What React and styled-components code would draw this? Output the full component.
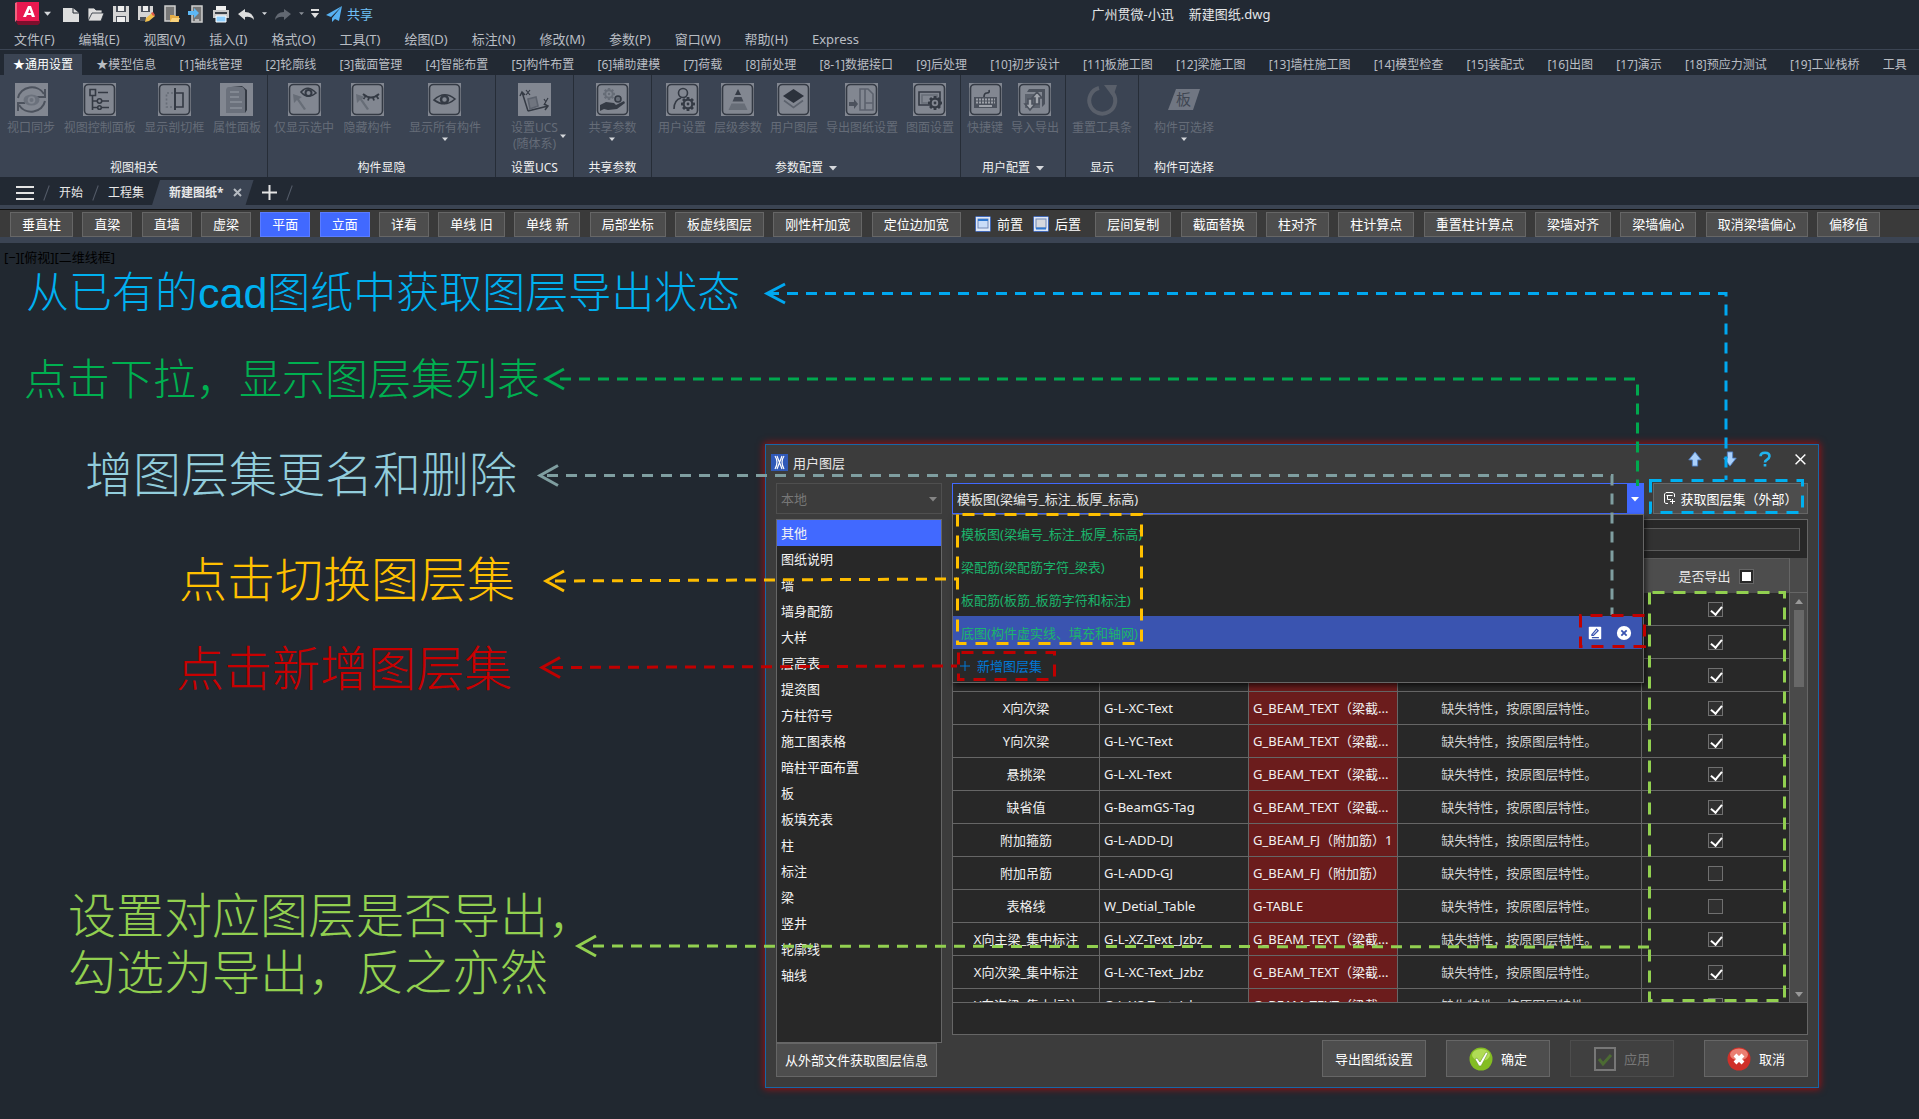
import React from "react";
import styled, { createGlobalStyle } from "styled-components";

const sans = `"Noto Sans", "Noto Sans CJK SC", sans-serif`;

const menus = [
  "文件(F)", "编辑(E)", "视图(V)", "插入(I)", "格式(O)", "工具(T)", "绘图(D)",
  "标注(N)", "修改(M)", "参数(P)", "窗口(W)", "帮助(H)", "Express"
];

const ribbonTabs = [
  "★通用设置", "★模型信息", "[1]轴线管理", "[2]轮廓线", "[3]截面管理", "[4]智能布置",
  "[5]构件布置", "[6]辅助建模", "[7]荷载", "[8]前处理", "[8-1]数据接口", "[9]后处理",
  "[10]初步设计", "[11]板施工图", "[12]梁施工图", "[13]墙柱施工图", "[14]模型检查",
  "[15]装配式", "[16]出图", "[17]演示", "[18]预应力测试", "[19]工业栈桥", "工具"
];

const ribbonGroups = [
  { title: "视图相关", width: 267, tools: [
    { label: "视口同步", icon: "sync" },
    { label: "视图控制面板", icon: "tree" },
    { label: "显示剖切框", icon: "section" },
    { label: "属性面板", icon: "sheet" }
  ]},
  { title: "构件显隐", width: 228, tools: [
    { label: "仅显示选中", icon: "eyePick" },
    { label: "隐藏构件", icon: "eyeClosed" },
    { label: "显示所有构件", icon: "eye", menu: true }
  ]},
  { title: "设置UCS", width: 78, tools: [
    { label: "设置UCS", second: "(随体系)", icon: "ucs" }
  ]},
  { title: "共享参数", width: 78, tools: [
    { label: "共享参数", icon: "hand", menu: true }
  ]},
  { title: "参数配置", width: 309, more: true, tools: [
    { label: "用户设置", icon: "userGear" },
    { label: "层级参数", icon: "pyramid" },
    { label: "用户图层", icon: "layers" },
    { label: "导出图纸设置", icon: "exportSheet" },
    { label: "图面设置", icon: "screenGear" }
  ]},
  { title: "用户配置", width: 105, more: true, tools: [
    { label: "快捷键", icon: "keyboard" },
    { label: "导入导出", icon: "transfer" }
  ]},
  { title: "显示", width: 73, tools: [
    { label: "重置工具条", icon: "reset", bare: true }
  ]},
  { title: "构件可选择", width: 90, tools: [
    { label: "构件可选择", icon: "board", bare: true, menu: true }
  ]}
];

const toolsLeft = [
  "垂直柱", "直梁", "直墙", "虚梁", "平面", "立面", "详看", "单线 旧", "单线 新",
  "局部坐标", "板虚线图层", "刚性杆加宽", "定位边加宽"
];
const toolsRight = [
  "层间复制", "截面替换", "柱对齐", "柱计算点", "重置柱计算点", "梁墙对齐", "梁墙偏心",
  "取消梁墙偏心", "偏移值"
];

const categories = [
  "其他", "图纸说明", "墙", "墙身配筋", "大样", "层高表", "提资图", "方柱符号", "施工图表格",
  "暗柱平面布置", "板", "板填充表", "柱", "标注", "梁", "竖井", "轮廓线", "轴线"
];

const layerSets = [
  "模板图(梁编号_标注_板厚_标高)",
  "梁配筋(梁配筋字符_梁表)",
  "板配筋(板筋_板筋字符和标注)",
  "底图(构件虚实线、填充和轴网)"
];

const beam = "G_BEAM_TEXT（梁截...";
const layers = [
  { name: "", layer: "", std: "", note: "", on: true },
  { name: "", layer: "", std: "", note: "", on: true },
  { name: "", layer: "", std: "", note: "", on: true },
  { name: "X向次梁", layer: "G-L-XC-Text", std: beam, on: true },
  { name: "Y向次梁", layer: "G-L-YC-Text", std: beam, on: true },
  { name: "悬挑梁", layer: "G-L-XL-Text", std: beam, on: true },
  { name: "缺省值", layer: "G-BeamGS-Tag", std: beam, on: true },
  { name: "附加箍筋", layer: "G-L-ADD-DJ", std: "G_BEAM_FJ（附加筋）1", on: true },
  { name: "附加吊筋", layer: "G-L-ADD-GJ", std: "G_BEAM_FJ（附加筋）", on: false },
  { name: "表格线", layer: "W_Detial_Table", std: "G-TABLE", on: false },
  { name: "X向主梁_集中标注", layer: "G-L-XZ-Text_Jzbz", std: beam, on: true },
  { name: "X向次梁_集中标注", layer: "G-L-XC-Text_Jzbz", std: beam, on: true },
  { name: "Y向次梁_集中标注", layer: "G-L-YC-Text_Jzbz", std: beam, on: true }
];

const notes = [
  { lines: ["从已有的cad图纸中获取图层导出状态"], x: 26, y: 265, size: 43, color: "#00b0f0" },
  { lines: ["点击下拉，显示图层集列表"], x: 24, y: 352, size: 43, color: "#00b050" },
  { lines: ["增图层集更名和删除"], x: 85, y: 447, size: 48, color: "#92cddc" },
  { lines: ["点击切换图层集"], x: 179, y: 552, size: 48, color: "#ffc000" },
  { lines: ["点击新增图层集"], x: 176, y: 641, size: 48, color: "#c80000" },
  { lines: ["设置对应图层是否导出，", "勾选为导出，反之亦然"], x: 68, y: 888, size: 48, color: "#92d050" }
];

const GlobalStyle = createGlobalStyle`
  * {
    box-sizing: border-box;
  }

  body {
    margin: 0;
    background: #212830;
    font-family: ${sans};
    font-size: 13px;
    line-height: 16px;
    color: #e8e8e8;
  }

  button, select, input {
    font: inherit;
    color: inherit;
    margin: 0;
  }

  ul {
    list-style: none;
    margin: 0;
    padding: 0;
  }

  svg {
    display: block;
    flex: none;
  }
`;

const Caret = ({ size = 7, color = "#d5d8dc" }) => (
  <svg width={size} height={size} viewBox="0 0 8 8" aria-hidden="true">
    <path d="M0 2h8L4 6.500z" fill={color} />
  </svg>
);

const Gear = ({ x, y, r, fill = "#343a44", hole = "#828791" }) => (
  <g transform={`translate(${x} ${y})`} stroke="none">
    {[0, 45, 90, 135].map((a) => (
      <rect key={a} x={-r * 0.2} y={-r} width={r * 0.4} height={r * 2} fill={fill} transform={`rotate(${a})`} />
    ))}
    <circle r={r * 0.78} fill={fill} />
    <circle r={r * 0.46} fill={hole} />
    <circle r={r * 0.2} fill={fill} />
  </g>
);

const frame = <rect x="1.500" y="1.500" width="30" height="30" rx="4" />;

const drawings = {
  sync: (
    <>
      <path d="M3 15A14 13 0 0 1 29 11M30 18A14 13 0 0 1 4 22M30 6v8h-8M3 28v-8h7" strokeWidth="2" stroke="#4c525d" />
      <ellipse cx="16.500" cy="17" rx="8" ry="5.500" fill="#6b717c" stroke="none" />
      <circle cx="16.500" cy="17" r="3.800" fill="#828791" stroke="none" />
      <circle cx="16.500" cy="17" r="2" fill="#6b717c" stroke="none" />
    </>
  ),
  tree: (
    <>
      {frame}
      <path d="M7 6.500h5.500v6H7zM15 9.500h10M9.500 13v14M9.500 18h5M9.500 24.500h5M18.500 18H26M18.500 24.500H26" />
      <circle cx="16.500" cy="18" r="2.200" />
      <circle cx="16.500" cy="24.500" r="1.800" />
    </>
  ),
  section: (
    <>
      {frame}
      <path d="M17 5v22" strokeWidth="2" />
      <path d="M17 10h8v14h-8" />
      <path d="M15 10H8.500v14H15" strokeDasharray="2 2" stroke="#676d77" />
    </>
  ),
  sheet: (
    <>
      <path d="M11 3h11l5 4v20l-2 3V8l-3-4z" fill="#343a44" stroke="none" />
      <path d="M9 4h13q3 1 3 5v21H6V8q0-4 3-4z" fill="#6b717c" stroke="none" />
      <path d="M10 9h9M10 14h9M10 19h12M10 25h12" stroke="#8b9099" />
    </>
  ),
  eyePick: (
    <>
      {frame}
      <path d="M13 9q7-8 15 1-8 7-15-1z" />
      <circle cx="20.500" cy="10" r="3" strokeWidth="2" />
      <path d="M5 11l9 3-3 2 7 10-2 1-7-10-3 3z" fill="#676d77" stroke="none" />
    </>
  ),
  eyeClosed: (
    <>
      {frame}
      <path d="M12 11q8 7 16 0M14.500 13l-2 3M18 14.500l-1 3M22 14.500l1 3M25.500 13l2 3" strokeWidth="1.800" />
      <path d="M5 11l9 3-3 2 7 10-2 1-7-10-3 3z" fill="#676d77" stroke="none" />
    </>
  ),
  eye: (
    <>
      {frame}
      <path d="M6 17q10-10 21-1-10 9-21 1z" />
      <circle cx="16.500" cy="16.500" r="3.500" strokeWidth="2.500" />
    </>
  ),
  ucs: (
    <>
      <path d="M10 28L4 9M2 13l2-4 3 3M10 28l20-5M26 21l4 2-3 4" strokeWidth="1.500" />
      <path d="M8 7l4 5M12 7l-4 5M26 16l2 3M30 15l-4 7" strokeWidth="1.200" />
      <path d="M10 16l8-2 2 9-8 3z" fill="#70757f" stroke="#5c626d" />
    </>
  ),
  hand: (
    <>
      {frame}
      <Gear x={13} y={11} r={6} fill="#676d77" />
      <circle cx="22" cy="16" r="3" fill="#676d77" />
      <path d="M4 22l6-3 8 1 2 2 8-4 1 2-8 6-9 1-4-1-4 2z" fill="#343a44" stroke="none" />
    </>
  ),
  userGear: (
    <>
      {frame}
      <circle cx="17" cy="10" r="4.500" />
      <path d="M8 26q0-9 7-11" />
      <Gear x={22} y={21} r={7} />
    </>
  ),
  pyramid: (
    <>
      {frame}
      <path d="M17 6l3 6h-6z" fill="#343a44" stroke="none" />
      <path d="M13.500 14h7l2 4.500h-11z" fill="#444a55" stroke="none" />
      <path d="M10.500 20.500h13l3 6.500h-19z" fill="#676d77" stroke="none" />
    </>
  ),
  layers: (
    <>
      {frame}
      <path d="M16.500 6l10.500 7-10.500 7L6 13z" fill="#2c323c" stroke="none" />
      <path d="M7 17.500l9.500 7 9.500-7" stroke="#5c626d" />
    </>
  ),
  exportSheet: (
    <>
      {frame}
      <path d="M15 27V6h8l5 5v16zM20 6v21M20 20h8" stroke="#5c626d" />
      <path d="M4 19h5v-3l4 5-4 5v-3H4z" fill="#4c525d" stroke="none" />
    </>
  ),
  screenGear: (
    <>
      {frame}
      <path d="M6 9h21v13H6z" />
      <path d="M9 12h15v8H9z" stroke="#676d77" />
      <Gear x={22} y={20} r={7} />
    </>
  ),
  keyboard: (
    <>
      {frame}
      <path d="M5 14h23v11H5z" fill="#4c525d" stroke="none" />
      <path d="M7 16.500h19M7 19.500h19" strokeDasharray="2 1" strokeWidth="2" stroke="#9da1a9" />
      <path d="M10 23h13" strokeWidth="2" stroke="#9da1a9" />
      <path d="M15 14q0-4 3-4t2-3" />
    </>
  ),
  transfer: (
    <>
      {frame}
      <path d="M7 11h15v14H7z" fill="#5c626d" stroke="none" />
      <path d="M9 9l2-3h16v15l-3 3V9z" fill="#4c525d" stroke="none" />
      <path d="M19 9l5 6h-3v6h-4v-6h-3zM12 27l-5-6h3v-5h4v5h3z" fill="#a2a6ad" stroke="#4c525d" />
    </>
  ),
  reset: (
    <>
      <path d="M13 5A13 13 0 1 0 26 9" stroke="#595f6a" strokeWidth="4" />
      <path d="M18 2h13L27 14z" fill="#595f6a" stroke="none" />
    </>
  ),
  board: (
    <>
      <path d="M9 6h24l-7 21H1z" fill="#707682" stroke="none" />
      <text x="9" y="22" fontSize="15" fill="#3f4652" stroke="none">板</text>
    </>
  )
};

const RibbonIcon = ({ name, bare }) => (
  <svg width="33" height="33" viewBox="0 0 33 33" fill="none" stroke="#343a44" strokeWidth="1.600" aria-hidden="true">
    {!bare && <rect width="33" height="33" fill="#828791" stroke="none" />}
    {drawings[name]}
  </svg>
);

const quickIcons = [
  { name: "新建", art: (
    <>
      <path d="M1 3h10l6 5v9H1z" fill="#dedede" />
      <path d="M11 3v5h6" stroke="#222933" />
    </>
  )},
  { name: "打开", art: <path d="M1 16V3h6l2 2h6v3M1 16L5 8h12l-3 8z" fill="#dedede" stroke="#222933" strokeWidth=".8" /> },
  { name: "保存", art: (
    <>
      <path d="M1 1h16v16H1z" fill="#d5d5d5" />
      <path d="M4 1h10v6H4zM4 11h10v6H4z" fill="#4a505a" />
      <path d="M6 1h6v5H6zM5 12h8v5H5z" fill="#efefef" />
    </>
  )},
  { name: "另存为", art: (
    <>
      <path d="M1 1h15v9l-5 5H1z" fill="#d5d5d5" />
      <path d="M4 1h9v6H4zM3 12h6v4H3z" fill="#4a505a" />
      <path d="M6 1h5v5H6z" fill="#efefef" />
      <path d="M8 17l1-4 6-5 3 3-6 5z" fill="#f2c14f" />
      <path d="M14 8l2-1 2 3-2 1z" fill="#e05a4a" />
    </>
  )},
  { name: "从移动设备打开", art: (
    <>
      <path d="M3 1h10v15H3z" fill="#777" stroke="#cfcfcf" strokeWidth="1.500" />
      <path d="M8 10h4l1 1h4v6H8z" fill="#e6ad45" />
      <path d="M8 17l2-4h8l-2 4z" fill="#fad37d" />
    </>
  )},
  { name: "保存到移动设备", art: (
    <>
      <path d="M5 1h10v16H5z" fill="#777" stroke="#cfcfcf" strokeWidth="1.500" />
      <path d="M1 6h6V3l5 5-5 5v-3H1z" fill="#5db8f5" />
      <path d="M8 15h4" stroke="#fff" />
    </>
  )},
  { name: "打印", art: (
    <>
      <path d="M4 1h10v5H4z" fill="#efefef" />
      <path d="M1 5h16v8H1z" fill="#c9c9c9" />
      <path d="M3 7h12v2H3z" fill="#3a4048" />
      <path d="M4 11h10v6H4z" fill="#8fd0ff" stroke="#fff" />
    </>
  )},
  { name: "放弃", menu: true, art: <path d="M1 9l7-5v3q8 0 9 8-3-4-9-3v3z" fill="#dedede" /> },
  { name: "重做", menu: true, dim: true, art: <path d="M17 9l-7-5v3q-8 0-9 8 3-4 9-3v3z" fill="#626872" /> }
];

const Art = ({ children, size = 18 }) => (
  <svg width={size} height={size} viewBox="0 0 18 18" fill="none" aria-hidden="true">{children}</svg>
);

// dashed callout lines drawn above the window
const Leaders = () => (
  <LeaderLayer aria-hidden="true">
    <g fill="none" strokeWidth="3" strokeDasharray="11 8">
      <path d="M768 293.500H1726V480" stroke="#00a8f0" />
      <path d="M560 379H1637.500V486" stroke="#00a84e" />
      <path d="M547 475.500H1612V615" stroke="#7f9ea0" />
      <path d="M555 581L957 579" stroke="#fdbc00" />
      <path d="M552 667.500L957 666" stroke="#c00000" />
      <path d="M593 946L1650 947" stroke="#92d050" />
    </g>
    <g fill="none" strokeWidth="3">
      <path d="M785 284l-18 9.500 18 9.500" stroke="#00a8f0" />
      <path d="M564 369l-18 10 18 10" stroke="#00a84e" />
      <path d="M558 465.500l-18 10 18 10" stroke="#7f9ea0" />
      <path d="M564 571l-18 10 18 10" stroke="#fdbc00" />
      <path d="M560 657.500l-18 10 18 10" stroke="#c00000" />
      <path d="M596 936l-18 10 18 10" stroke="#92d050" />
    </g>
    <g fill="none" strokeWidth="3" strokeDasharray="12 9">
      <path d="M957.500 514.500V643.500H1141.500V514.500z" stroke="#ffc000" />
      <path d="M958.500 652.500V679.500H1054.500V652.500z" stroke="#c00000" />
      <path d="M1580.500 615.500V646.500H1644.500V615.500z" stroke="#c00000" />
      <path d="M1650.500 480.500V512.500H1802.500V480.500z" stroke="#00b0f0" />
      <path d="M1649.500 592.500V1000.500H1784.500V592.500z" stroke="#92d050" />
    </g>
  </LeaderLayer>
);

function LayerDialog() {
  return (
    <Dialog role="dialog" aria-label="用户图层">
      <DialogTitle>
        <svg width="17" height="17" viewBox="0 0 17 17" aria-hidden="true">
          <rect width="17" height="17" fill="#3059b8" />
          <path d="M4 2q4 6 0 13M13 2q-4 6 0 13M6 2l5 13M11 2L6 15" fill="none" stroke="#fff" strokeWidth="1.200" />
        </svg>
        <span>用户图层</span>
        <WindowTools>
          <IconButton aria-label="上移">
            <Art size={16}><path d="M9 1l7 9h-4v7H6v-7H2z" fill="#a9d0fb" stroke="#4f7fc4" /></Art>
          </IconButton>
          <IconButton aria-label="下移">
            <Art size={16}><path d="M9 17l7-9h-4V1H6v7H2z" fill="#a9d0fb" stroke="#4f7fc4" /></Art>
          </IconButton>
          <IconButton aria-label="帮助">
            <Art size={16}>
              <path d="M4 6q0-4 5-4t5 4q0 2-3 4-2 1-2 3M9 14.500v3" stroke="#21b4ee" strokeWidth="3" />
            </Art>
          </IconButton>
          <IconButton aria-label="关闭">
            <Art size={16}><path d="M4 4l11 11M15 4L4 15" stroke="#fff" strokeWidth="1.600" /></Art>
          </IconButton>
        </WindowTools>
      </DialogTitle>
      <DialogBody>
        <SideColumn>
          <SourceCombo>
            <ComboSelect disabled aria-label="来源" defaultValue="本地">
              <option>本地</option>
            </ComboSelect>
            <ComboArrow><Caret size={8} color="#858585" /></ComboArrow>
          </SourceCombo>
          <CategoryList>
            {categories.map((c, i) => <Category key={c} $active={i === 0}>{c}</Category>)}
          </CategoryList>
          <SourceButton>从外部文件获取图层信息</SourceButton>
        </SideColumn>
        <MainColumn>
          <ComboRow>
            <SetCombo>
              <ComboSelect aria-label="图层集" defaultValue={layerSets[0]}>
                {layerSets.map((s) => <option key={s}>{s}</option>)}
              </ComboSelect>
              <ComboArrow $filled><Caret size={8} color="#fff" /></ComboArrow>
              <DropList>
                {layerSets.map((s, i) => (
                  <DropItem key={s} $active={i === 3}>
                    {s}
                    {i === 3 && (
                      <DropActions>
                        <IconButton aria-label="更名">
                          <Art size={14}>
                            <rect x="1" y="1" width="16" height="16" rx="1" fill="#fff" />
                            <path d="M5 11l6-7 2 2-6 6H5zM5 15h9" stroke="#3a54b0" strokeWidth="1.600" />
                          </Art>
                        </IconButton>
                        <IconButton aria-label="删除">
                          <Art size={16}>
                            <circle cx="9" cy="9" r="8" fill="#fff" />
                            <path d="M6 6l6 6M12 6l-6 6" stroke="#3a54b0" strokeWidth="2" />
                          </Art>
                        </IconButton>
                      </DropActions>
                    )}
                  </DropItem>
                ))}
                <NewSet>
                  <svg width="10" height="10" viewBox="0 0 10 10" aria-hidden="true">
                    <path d="M5 0v10M0 5h10" stroke="#0078d7" />
                  </svg>
                  新增图层集
                </NewSet>
              </DropList>
            </SetCombo>
            <FetchButton>
              <svg width="13" height="13" viewBox="0 0 13 13" fill="none" stroke="#fff" aria-hidden="true">
                <path d="M5 11.500H3l-1.500-1V2L3 .5h7L11.500 2v3M3.500 3.500h6M4.500 3.500v4H8M7 9.500h5M9.500 7v5" />
              </svg>
              获取图层集（外部）
            </FetchButton>
          </ComboRow>
          <Panel>
            <SearchBar>
              <SearchInput type="text" aria-label="搜索" />
            </SearchBar>
            <TableArea>
              <LayerTable>
                <colgroup>
                  <Col $w={147} /><Col $w={149} /><Col $w={147} /><Col /><Col $w={148} />
                </colgroup>
                <thead>
                  <tr>
                    <HeadCell /><HeadCell /><HeadCell /><HeadCell />
                    <HeadCell>
                      <HeadLabel>是否导出 <MasterCheck type="checkbox" /></HeadLabel>
                    </HeadCell>
                  </tr>
                </thead>
                <tbody>
                  {layers.map((row, i) => (
                    <tr key={i}>
                      <Cell $center>{row.name}</Cell>
                      <Cell>{row.layer}</Cell>
                      <Cell $red>{row.std}</Cell>
                      <Cell $center $muted>{row.note ?? "缺失特性，按原图层特性。"}</Cell>
                      <Cell $center>
                        <Check type="checkbox" defaultChecked={row.on} aria-label={`导出 ${row.name}`} />
                      </Cell>
                    </tr>
                  ))}
                </tbody>
              </LayerTable>
              <ScrollColumn>
                <ScrollHead />
                <ScrollTrack>
                  <svg width="8" height="5" viewBox="0 0 8 5" aria-hidden="true"><path d="M0 5h8L4 0z" fill="#999" /></svg>
                  <Thumb />
                  <svg width="8" height="5" viewBox="0 0 8 5" aria-hidden="true"><path d="M0 0h8L4 5z" fill="#999" /></svg>
                </ScrollTrack>
              </ScrollColumn>
            </TableArea>
            <PanelFoot />
          </Panel>
          <Actions>
            <Action>导出图纸设置</Action>
            <Action>
              <svg width="24" height="24" viewBox="0 0 24 24" aria-hidden="true">
                <circle cx="12" cy="12" r="11.500" fill="#84bd22" />
                <ellipse cx="12" cy="8" rx="9" ry="6" fill="#b0dc55" />
                <path d="M6 12l2-1 3 4 6-10 2 1-7 13h-2z" fill="#fff" stroke="#6c9a22" strokeWidth=".6" />
              </svg>
              确定
            </Action>
            <Action disabled>
              <svg width="22" height="24" viewBox="0 0 22 24" fill="none" aria-hidden="true">
                <rect x="1" y="1" width="20" height="22" stroke="#777" strokeWidth="2" />
                <path d="M5 12l4 5 8-9" stroke="#4c6b33" strokeWidth="3" />
              </svg>
              应用
            </Action>
            <Action $last>
              <svg width="24" height="24" viewBox="0 0 24 24" aria-hidden="true">
                <circle cx="12" cy="12" r="11.500" fill="#cf3029" />
                <ellipse cx="12" cy="7.500" rx="9" ry="6" fill="#ea7f72" />
                <path d="M8 8l8 8M16 8l-8 8" stroke="#fff" strokeWidth="4" />
              </svg>
              取消
            </Action>
          </Actions>
        </MainColumn>
      </DialogBody>
    </Dialog>
  );
}

export default function App() {
  return (
    <Page>
      <GlobalStyle />
      <TitleBar>
        <AppButton aria-label="应用程序菜单">
          <svg width="26" height="23" viewBox="0 0 26 23" aria-hidden="true">
            <path d="M1 20l3-2h21v3l-2 2H3z" fill="#7d0f2d" />
            <path d="M0 1l2-1v18l-2 2z" fill="#f0637f" />
            <path d="M2 0h22v19H2z" fill="#e8194f" />
            <path d="M13 4h3l4 11h-3l-1-2h-4l-1 2H8zM14.500 7l-1.500 4h3z" fill="#fff" fillRule="evenodd" />
          </svg>
          <Caret />
        </AppButton>
        <QuickBar>
          {quickIcons.map((q) => (
            <IconButton key={q.name} aria-label={q.name}>
              <Art>{q.art}</Art>
              {q.menu && <QuickCaret><Caret size={5} color={q.dim ? "#8a8f97" : "#d5d8dc"} /></QuickCaret>}
            </IconButton>
          ))}
          <IconButton aria-label="自定义">
            <svg width="8" height="9" viewBox="0 0 8 9" aria-hidden="true">
              <path d="M0 0h8v2H0zM0 4h8L4 9z" fill="#dedede" />
            </svg>
          </IconButton>
        </QuickBar>
        <ShareButton>
          <Art><path d="M17 1L1 10l5 2zM17 1L7 13v4l3-3 4 2z" fill="#56b1f2" /></Art>
          共享
        </ShareButton>
        <Titles>
          <span>广州贯微-小迅</span>
          <span>新建图纸.dwg</span>
        </Titles>
      </TitleBar>
      <MenuBar>
        {menus.map((m) => <MenuItem key={m}>{m}</MenuItem>)}
      </MenuBar>
      <TabBar>
        {ribbonTabs.map((t, i) => <RibbonTab key={t} $active={i === 0}>{t}</RibbonTab>)}
      </TabBar>
      <Ribbon>
        {ribbonGroups.map((g) => (
          <Group key={g.title} $width={g.width}>
            <GroupTools $single={g.tools.length === 1}>
              {g.tools.map((t) => (
                <Tool key={t.label} disabled $menu={t.menu}>
                  <RibbonIcon name={t.icon} bare={t.bare} />
                  <ToolLabel>
                    {t.label}
                    {t.second && <><br />{t.second}</>}
                  </ToolLabel>
                  {t.menu && <Caret size={6} />}
                  {t.second && <SideCaret><Caret size={6} /></SideCaret>}
                </Tool>
              ))}
            </GroupTools>
            <GroupTitle>{g.title}{g.more && <Caret size={8} />}</GroupTitle>
          </Group>
        ))}
      </Ribbon>
      <DocBar>
        <IconButton aria-label="菜单">
          <svg width="18" height="14" viewBox="0 0 18 14" aria-hidden="true">
            <path d="M0 1h18M0 7h18M0 13h18" stroke="#e4e4e4" strokeWidth="2" />
          </svg>
        </IconButton>
        <Slash />
        <DocTab>开始</DocTab>
        <Slash />
        <DocTab>工程集</DocTab>
        <DocTab $active>
          新建图纸*
          <svg width="9" height="9" viewBox="0 0 9 9" aria-hidden="true">
            <path d="M1 1l7 7M8 1L1 8" stroke="#b5bac1" strokeWidth="2" />
          </svg>
        </DocTab>
        <IconButton aria-label="新图形">
          <svg width="15" height="15" viewBox="0 0 15 15" aria-hidden="true">
            <path d="M7.500 0v15M0 7.500h15" stroke="#e4e4e4" strokeWidth="2" />
          </svg>
        </IconButton>
        <Slash />
      </DocBar>
      <ToolStrip>
        {toolsLeft.map((t) => (
          <StripButton key={t} $active={t === "平面" || t === "立面"}>{t}</StripButton>
        ))}
        <OrderTools>
          {["前置", "后置"].map((t, i) => (
            <OrderButton key={t}>
              <svg width="16" height="16" viewBox="0 0 16 16" aria-hidden="true">
                <rect x=".5" y=".5" width="15" height="15" rx="1" fill="#dfe8f8" stroke="#4167b5" />
                <rect x="3" y="3" width="10" height="9" fill={i ? "#d5d8df" : "#c9dcf8"} stroke="#7288b5" />
                <path d={i ? "M3 12.500h10" : "M3 4h10"} stroke="#2e77d0" strokeWidth="2" />
              </svg>
              {t}
            </OrderButton>
          ))}
        </OrderTools>
        {toolsRight.map((t) => <StripButton key={t}>{t}</StripButton>)}
      </ToolStrip>
      <Canvas>
        <ViewLabel>[−][俯视][二维线框]</ViewLabel>
      </Canvas>
      {notes.map((n) => (
        <Note key={n.lines[0]} $x={n.x} $y={n.y} $size={n.size} $color={n.color}>
          {n.lines.map((l) => <div key={l}>{l}</div>)}
        </Note>
      ))}
      <LayerDialog />
      <Leaders />
    </Page>
  );
}

const Page = styled.div`
  position: relative;
  display: flex;
  flex-direction: column;
  min-height: 100vh;
  overflow: hidden;
  background: #222933;
`;

const IconButton = styled.button`
  display: flex;
  align-items: center;
  padding: 0;
  border: none;
  background: none;
`;

const TitleBar = styled.header`
  display: flex;
  align-items: center;
  height: 27px;
  padding-left: 15px;
`;

const AppButton = styled(IconButton)`
  gap: 3px;
`;

const QuickBar = styled.div`
  display: flex;
  align-items: center;
  gap: 7px;
  margin-left: 11px;
`;

const QuickCaret = styled.span`
  margin-left: 7px;
`;

const ShareButton = styled(IconButton)`
  gap: 4px;
  margin-left: 6px;
  color: #6fc0f7;
`;

const Titles = styled.div`
  display: flex;
  flex: 1;
  justify-content: center;
  gap: 15px;
  padding-left: 70px;
  color: #e4e6e8;
`;

const MenuBar = styled.nav`
  display: flex;
  align-items: center;
  gap: 24px;
  height: 23px;
  padding: 2px 0 0 14px;
  border-bottom: 1px solid #3b4453;
`;

const MenuItem = styled.button`
  padding: 0;
  border: none;
  background: none;
  color: #b9bdc3;
`;

const TabBar = styled.div`
  display: flex;
  justify-content: space-between;
  height: 25px;
  padding: 4px 3px 0 4px;
  font-size: 12px;
`;

const RibbonTab = styled.button`
  padding: 0 9px;
  border: none;
  background: ${(p) => (p.$active ? "#3b4453" : "none")};
  color: ${(p) => (p.$active ? "#fff" : "#b9bdc3")};
  white-space: nowrap;
`;

const Ribbon = styled.div`
  display: flex;
  height: 102px;
  padding-left: 1px;
  background: #3b4453;
  font-size: 12px;
`;

const Group = styled.section`
  display: flex;
  flex-direction: column;
  flex: none;
  width: ${(p) => p.$width}px;
  padding: 8px 6px 0;
  border-right: 1px solid #262d37;

  &:last-child {
    border-right: none;
  }
`;

const GroupTools = styled.div`
  display: flex;
  flex: 1;
  align-items: flex-start;
  justify-content: ${(p) => (p.$single ? "center" : "space-between")};
`;

const Tool = styled.button`
  position: relative;
  display: flex;
  flex-direction: column;
  align-items: center;
  padding: 0 ${(p) => (p.$menu ? 8 : 0)}px;
  border: none;
  background: none;
  color: #656c78;
`;

const ToolLabel = styled.span`
  margin-top: 4px;
  white-space: nowrap;
`;

const SideCaret = styled.span`
  position: absolute;
  right: -8px;
  top: 50px;
`;

const GroupTitle = styled.div`
  display: flex;
  align-items: center;
  justify-content: center;
  gap: 6px;
  height: 18px;
  color: #f0f0f0;
  white-space: nowrap;
`;

const DocBar = styled.div`
  display: flex;
  align-items: center;
  gap: 8px;
  height: 32px;
  padding: 3px 0 0 16px;
  border-bottom: 4px solid #3b4453;
`;

const Slash = styled.i`
  width: 1px;
  height: 16px;
  margin: 0 4px;
  background: #545c69;
  transform: rotate(20deg);
`;

const DocTab = styled.button`
  display: flex;
  align-items: center;
  gap: 9px;
  height: 25px;
  padding: ${(p) => (p.$active ? "0 12px 0 17px" : "0")};
  border: none;
  background: ${(p) => (p.$active ? "#3b4453" : "none")};
  clip-path: ${(p) => (p.$active ? "polygon(8px 0, 100% 0, calc(100% - 8px) 100%, 0 100%)" : "none")};
  font-size: 12px;
  font-weight: ${(p) => (p.$active ? 700 : 400)};
`;

const ToolStrip = styled.div`
  display: flex;
  align-items: center;
  justify-content: space-between;
  height: 34px;
  padding: 1px 39px 0 10px;
  border-top: 1px solid #111;
  border-bottom: 6px solid #3b4453;
  background: #3a3a3a;
`;

const StripButton = styled.button`
  height: 25px;
  padding: 0 11px;
  border: 1px solid ${(p) => (p.$active ? "#5b7cff" : "#666")};
  background: ${(p) => (p.$active ? "#4169ff" : "#4d4d4d")};
  color: #fff;
  white-space: nowrap;
`;

const OrderTools = styled.div`
  display: flex;
  gap: 10px;
  margin: 0 5px;
`;

const OrderButton = styled(IconButton)`
  gap: 6px;
  color: #fff;
`;

const Canvas = styled.main`
  flex: 1;
  padding: 6px 4px;
  background: #212830;
`;

const ViewLabel = styled.div`
  color: #000;
`;

const Note = styled.div`
  position: absolute;
  left: ${(p) => p.$x}px;
  top: ${(p) => p.$y}px;
  font-family: "Liberation Sans", "Noto Sans CJK SC", sans-serif;
  font-size: ${(p) => p.$size}px;
  font-weight: 300;
  line-height: 57px;
  color: ${(p) => p.$color};
  white-space: nowrap;
`;

const LeaderLayer = styled.svg`
  position: absolute;
  z-index: 3;
  inset: 0;
  width: 100%;
  height: 100%;
  pointer-events: none;
`;

const Dialog = styled.section`
  position: absolute;
  left: 765px;
  top: 444px;
  width: 1054px;
  padding: 0 10px;
  border: 1px solid #1668a8;
  background: #3c3c3c;
  box-shadow: 0 0 7px 1px rgba(190, 10, 10, 0.8);
`;

const DialogTitle = styled.div`
  display: flex;
  align-items: center;
  gap: 5px;
  height: 38px;
  margin-left: -5px;
  padding-bottom: 3px;
`;

const WindowTools = styled.div`
  display: flex;
  gap: 19px;
  margin-left: auto;
  padding-bottom: 8px;
`;

const DialogBody = styled.div`
  display: grid;
  grid-template-columns: 166px 1fr;
  column-gap: 10px;
  padding-bottom: 10px;
`;

const SideColumn = styled.div`
  display: flex;
  flex-direction: column;
`;

const MainColumn = styled.div`
  display: flex;
  flex-direction: column;
  gap: 5px;
  min-width: 0;
`;

const Combo = styled.div`
  position: relative;
  display: flex;
  height: 31px;
  border: 1px solid #4f4f4f;
`;

const SourceCombo = styled(Combo)`
  margin-bottom: 5px;
`;

const SetCombo = styled(Combo)`
  flex: 1;
  border-color: #4169ff;
  background: #323232;
`;

const ComboSelect = styled.select`
  flex: 1;
  min-width: 0;
  padding: 0 4px;
  border: none;
  outline: none;
  appearance: none;
  background: none;

  &:disabled {
    color: #777;
    opacity: 1;
  }
`;

const ComboArrow = styled.span`
  display: grid;
  place-items: center;
  width: 16px;
  background: ${(p) => (p.$filled ? "#4169ff" : "none")};
`;

const CategoryList = styled.ul`
  flex: 1;
  border: 1px solid #666;
  background: #282828;
`;

const Category = styled.li`
  padding: 5px 4px;
  background: ${(p) => (p.$active ? "#4169ff" : "none")};
  color: #f4f4f4;
`;

const PlainButton = styled.button`
  display: flex;
  align-items: center;
  justify-content: center;
  padding: 0;
  border: 1px solid #666;
  background: #4d4d4d;
  color: #fff;
  white-space: nowrap;
`;

const SourceButton = styled(PlainButton)`
  align-self: flex-start;
  height: 34px;
  padding: 0 8px;
`;

const ComboRow = styled.div`
  display: flex;
  gap: 9px;
`;

const FetchButton = styled(PlainButton)`
  gap: 4px;
  width: 155px;
`;

const DropList = styled.ul`
  position: absolute;
  z-index: 2;
  top: 30px;
  left: -1px;
  right: -1px;
  padding: 2px 1px 0 0;
  border: 1px solid #666;
  background: #282828;
  box-shadow: 2px 3px 5px rgba(0, 0, 0, 0.6);
`;

const DropItem = styled.li`
  display: flex;
  align-items: center;
  justify-content: space-between;
  height: 33px;
  padding: 0 10px 0 8px;
  background: ${(p) => (p.$active ? "#3a54b0" : "none")};
  color: #1bb56c;
`;

const DropActions = styled.span`
  display: flex;
  align-items: center;
  gap: 14px;
`;

const NewSet = styled(DropItem)`
  justify-content: flex-start;
  gap: 7px;
  padding-left: 7px;
  color: #0078d7;
`;

const Panel = styled.div`
  border: 1px solid #666;
  background: #282828;
`;

const SearchBar = styled.div`
  padding: 8px 7px 7px;
`;

const SearchInput = styled.input`
  display: block;
  width: 100%;
  height: 23px;
  border: 1px solid #5c5c5c;
  outline: none;
  background: #323232;
`;

const TableArea = styled.div`
  display: flex;
  height: 444px;
  overflow: hidden;
`;

const LayerTable = styled.table`
  flex: 1;
  table-layout: fixed;
  border-collapse: separate;
  border-spacing: 0;
  align-self: flex-start;
`;

const Col = styled.col`
  width: ${(p) => (p.$w ? `${p.$w}px` : "auto")};
`;

const HeadCell = styled.th`
  height: 35px;
  padding: 0;
  border-top: 1px solid #5c5c5c;
  border-right: 1px solid #666;
  background: #4d4d4d;
  font-weight: 400;
`;

const HeadLabel = styled.label`
  display: flex;
  align-items: center;
  justify-content: center;
  gap: 9px;
`;

const Cell = styled.td`
  height: 33px;
  padding: 0 4px;
  overflow: hidden;
  border-right: 1px solid #666;
  border-bottom: 1px solid #666;
  background: ${(p) => (p.$red ? "#6b1c1c" : "none")};
  color: ${(p) => (p.$muted ? "#cfcfcf" : "#f0f0f0")};
  text-align: ${(p) => (p.$center ? "center" : "left")};
  white-space: nowrap;
`;

const Check = styled.input`
  display: block;
  position: relative;
  width: 15px;
  height: 15px;
  margin: 0 auto;
  border: 1px solid #707070;
  appearance: none;
  background: #303030;

  &:checked::before {
    content: "";
    position: absolute;
    left: 4px;
    top: 1px;
    width: 5px;
    height: 9px;
    border: solid #fff;
    border-width: 0 2px 2px 0;
    transform: rotate(40deg);
  }
`;

const MasterCheck = styled.input`
  width: 13px;
  height: 13px;
  border: 2px solid #282828;
  outline: 1px solid #666;
  appearance: none;
  background: #fff;
`;

const ScrollColumn = styled.div`
  display: flex;
  flex-direction: column;
  width: 17px;
  background: #4a4a4a;
`;

const ScrollHead = styled.div`
  height: 35px;
  border-bottom: 1px solid #666;
`;

const ScrollTrack = styled.div`
  display: flex;
  flex: 1;
  flex-direction: column;
  align-items: center;
  padding: 6px 0 5px;
`;

const Thumb = styled.div`
  width: 10px;
  height: 77px;
  margin: 6px 0 auto;
  background: #686868;
`;

const PanelFoot = styled.div`
  height: 32px;
  border-top: 1px solid #666;
`;

const Actions = styled.div`
  display: flex;
  justify-content: flex-end;
  gap: 20px;
`;

const Action = styled(PlainButton)`
  gap: 8px;
  width: 104px;
  height: 37px;
  margin-left: ${(p) => (p.$last ? "10px" : "0")};

  &:disabled {
    border-color: #4d4d4d;
    background: #404040;
    color: #777;
  }
`;
